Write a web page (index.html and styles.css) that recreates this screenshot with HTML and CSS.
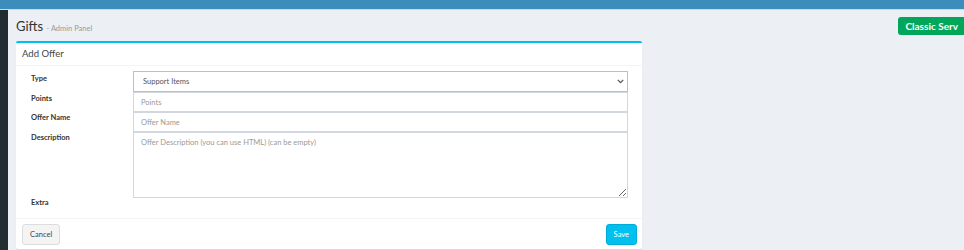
FILE: index.html
```html
<!DOCTYPE html>
<html lang="en">
<head>
    <meta charset="UTF-8">
    <title>Gifts - Admin Panel</title>
    <link rel="stylesheet" href="styles.css">
</head>
<body>
    <div class="topbar"></div>
    <div class="wrapper">
        <div class="sidebar"></div>
        <div class="content">
            <div class="content-header">
                <h1>Gifts <small>- Admin Panel</small></h1>
                <a class="btn-server">Classic Serv</a>
            </div>

            <div class="box">
                <div class="box-header">Add Offer</div>
                <div class="box-body">
                    <div class="form-row first">
                        <label>Type</label>
                        <div class="select-wrap">
                            <select class="field select">
                                <option>Support Items</option>
                            </select>
                            <svg class="chevron" width="7" height="5" viewBox="0 0 7 5">
                                <path d="M0.8 0.9 L3.5 3.6 L6.2 0.9" fill="none" stroke="#555" stroke-width="1.3"/>
                            </svg>
                        </div>
                    </div>
                    <div class="form-row">
                        <label class="lbl-points">Points</label>
                        <input class="field" type="text" placeholder="Points">
                    </div>
                    <div class="form-row">
                        <label>Offer Name</label>
                        <input class="field" type="text" placeholder="Offer Name">
                    </div>
                    <div class="form-row">
                        <label>Description</label>
                        <textarea class="field area" placeholder="Offer Description (you can use HTML) (can be empty)"></textarea>
                    </div>
                    <div class="form-row extra">
                        <label>Extra</label>
                        <div></div>
                    </div>
                </div>
                <div class="box-footer">
                    <button class="btn btn-default">Cancel</button>
                    <button class="btn btn-info">Save</button>
                </div>
            </div>
        </div>
    </div>
</body>
</html>
```

FILE: styles.css
```css
body {
    margin: 0;
    padding: 0;
    font-family: Lato, "Open Sans", sans-serif;
    background: #ecf0f5;
    color: #333;
    overflow: hidden;
}

.topbar {
    height: 9px;
    background: #3c8dbc;
    border-bottom: 1px solid #c9d9e6;
}

.wrapper {
    display: flex;
    height: 240px;
}

.sidebar {
    width: 8px;
    background: #222d32;
}

.content {
    flex: 1;
    padding-left: 8px;
}

.content-header {
    display: flex;
    justify-content: space-between;
    align-items: flex-start;
    height: 31px;
}

.content-header h1 {
    margin: 8px 0 0 0;
    font-size: 13px;
    font-weight: 400;
    color: #333;
}

.content-header small {
    font-size: 7.5px;
    color: #999;
}

.btn-server {
    margin-top: 7px;
    background: #00a65a;
    color: #fff;
    font-size: 10px;
    font-weight: 700;
    line-height: 18px;
    padding: 0 6px 0 7px;
    border-radius: 3px 0 0 3px;
}

.box {
    width: 626px;
    background: #fff;
    border-top: 2px solid #00c0ef;
    border-radius: 2px;
    box-shadow: 0 1px 1px rgba(0, 0, 0, 0.1);
}

.box-header {
    height: 22px;
    line-height: 22px;
    padding-left: 6px;
    font-size: 9.5px;
    color: #444;
    border-bottom: 1px solid #f4f4f4;
}

.box-body {
    padding: 5px 14px 5px 15px;
}

.form-row {
    display: grid;
    grid-template-columns: 102px 1fr;
    align-items: start;
}

.form-row label {
    font-size: 7.5px;
    font-weight: 700;
    color: #333;
    padding-top: 1px;
}

.form-row.first label {
    padding-top: 3px;
}

.form-row .lbl-points {
    padding-top: 2px;
}

.form-row.extra {
    height: 15px;
}

.form-row.extra label {
    padding-top: 0;
}

.field {
    display: block;
    box-sizing: border-box;
    width: 100%;
    height: 20px;
    margin: 0;
    border: 1px solid #d2d6de;
    border-radius: 0;
    padding: 0 7px;
    font-family: Lato, sans-serif;
    font-size: 7.5px;
    color: #555;
    background: #fff;
    outline: none;
}

.field::placeholder {
    color: #999;
}

.select-wrap {
    position: relative;
}

.select {
    height: 21px;
    padding-left: 9px;
    border-color: #a6c6de;
    -webkit-appearance: none;
    appearance: none;
}

.chevron {
    position: absolute;
    right: 4px;
    top: 8px;
}

.area {
    height: 66px;
    padding-top: 5px;
    resize: vertical;
}

.box-footer {
    display: flex;
    justify-content: space-between;
    padding: 5px 5px 4px 6px;
    border-top: 1px solid #f4f4f4;
}

.btn {
    height: 21px;
    padding: 0 7px;
    font-family: Lato, sans-serif;
    font-size: 7.5px;
    border-radius: 3px;
    cursor: pointer;
}

.btn-default {
    background: #f4f4f4;
    border: 1px solid #ddd;
    color: #444;
}

.btn-info {
    background: #00c0ef;
    border: 1px solid #00acd6;
    color: #fff;
}
```
